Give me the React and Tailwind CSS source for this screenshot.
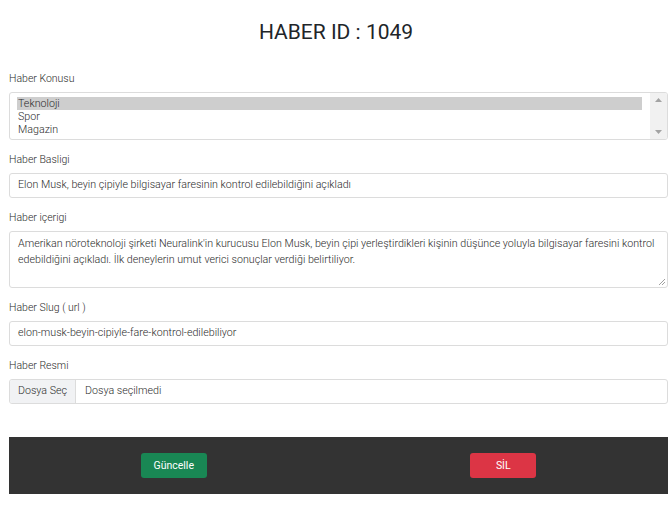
import React from 'react';

// Small label above each form box
const Label = ({ children }) => (
  <div className="mt-[12px] mb-[5px] h-[16px] text-[10.5px] leading-[16px] font-light text-[#2b2b2b]">{children}</div>
);

const Box = ({ children, className = '' }) => (
  <div className={`border border-[#dcdcdc] rounded-[3px] bg-white ${className}`}>{children}</div>
);

const options = ['Teknoloji', 'Spor', 'Magazin'];

export default function App() {
  return (
    <div className="w-[672px] h-[513px] bg-white text-[#2b2b2b]" style={{ fontFamily: 'Roboto, "Liberation Sans", sans-serif' }}>
      <div className="h-[59px] pt-[18px] text-center text-[21px] leading-[28px] text-[#212529]">HABER ID : 1049</div>

      <div className="ml-[9px] w-[659px] font-light">
        <Label>Haber Konusu</Label>
        <Box className="h-[48px] flex overflow-hidden">
          <div className="flex-1 pl-[7px] pr-[8px] pt-[4px]">
            {options.map((o, i) => (
              <div
                key={o}
                className={`h-[13px] text-[10.7px] leading-[13px] pl-[1px] ${i === 0 ? 'bg-[#cecece]' : ''}`}
              >
                {o}
              </div>
            ))}
          </div>
          <div className="w-[17px] bg-[#f1f1f1] flex flex-col justify-between items-center py-[5px]">
            <svg width="7" height="4" viewBox="0 0 7 4"><path d="M0 4 L3.5 0 L7 4 Z" fill="#a3a3a3" /></svg>
            <svg width="7" height="4" viewBox="0 0 7 4"><path d="M0 0 L3.5 4 L7 0 Z" fill="#a3a3a3" /></svg>
          </div>
        </Box>

        <Label>Haber Basligi</Label>
        <Box className="h-[25px] px-[8px] flex items-center text-[10.7px]">
          Elon Musk, beyin çipiyle bilgisayar faresinin kontrol edilebildiğini açıkladı
        </Box>

        <Label>Haber içerigi</Label>
        <Box className="h-[57px] px-[8px] py-[4px] text-[10.7px] leading-[16px] relative">
          Amerikan nöroteknoloji şirketi Neuralink'in kurucusu Elon Musk, beyin çipi yerleştirdikleri kişinin düşünce yoluyla bilgisayar faresini kontrol edebildiğini açıkladı. İlk deneylerin umut verici sonuçlar verdiği belirtiliyor.
          <svg className="absolute right-[2px] bottom-[2px]" width="7" height="7" viewBox="0 0 7 7">
            <path d="M7 1 L1 7 M7 4 L4 7" stroke="#888" strokeWidth="0.8" />
          </svg>
        </Box>

        <Label>Haber Slug ( url )</Label>
        <Box className="h-[25px] px-[8px] flex items-center text-[10.7px]">
          elon-musk-beyin-cipiyle-fare-kontrol-edilebiliyor
        </Box>

        <Label>Haber Resmi</Label>
        <Box className="h-[25px] flex items-stretch text-[10.7px] overflow-hidden">
          <div className="w-[66px] bg-[#f1f2f4] border-r border-[#dcdcdc] flex items-center justify-center">Dosya Seç</div>
          <div className="flex items-center pl-[9px]">Dosya seçilmedi</div>
        </Box>

        <div className="mt-[33px] h-[57px] bg-[#333333] grid grid-cols-2 items-center font-normal">
          <div className="flex justify-center">
            <button className="w-[66px] h-[25px] rounded-[3px] bg-[#198754] text-white text-[10.5px]">Güncelle</button>
          </div>
          <div className="flex justify-center">
            <button className="w-[66px] h-[25px] rounded-[3px] bg-[#dc3545] text-white text-[10.5px]">SİL</button>
          </div>
        </div>
      </div>
    </div>
  );
}
